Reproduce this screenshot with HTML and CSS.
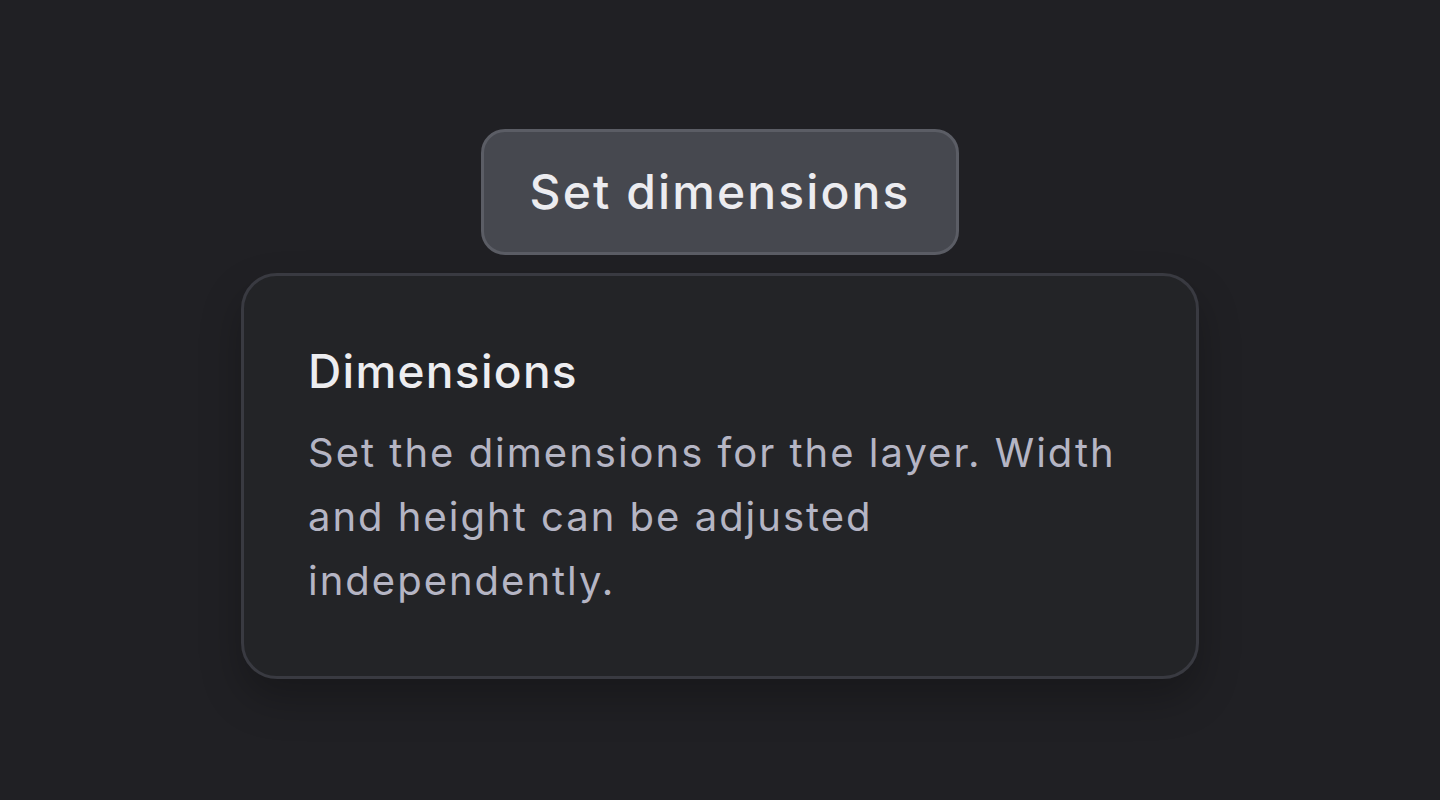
FILE: index.html
```html
<!DOCTYPE html>
<html lang="en">

<head>
  <meta charset="UTF-8">
  <meta name="viewport" content="width=device-width, initial-scale=1.0">
  <title>Dimensions</title>
  <link rel="stylesheet" href="styles.css">
</head>

<body>
  <main class="stage">
    <button class="trigger" type="button">Set dimensions</button>
    <div class="popover">
      <h2>Dimensions</h2>
      <p>Set the dimensions for the layer. Width and height can be adjusted independently.</p>
    </div>
  </main>
</body>

</html>
```

FILE: styles.css
```css
body {
  margin: 0;
  font-family: Inter, "Noto Sans", sans-serif;
  background-color: #202024;
}

.stage {
  box-sizing: border-box;
  height: 800px;
  padding-top: 8px;
  display: flex;
  flex-direction: column;
  align-items: center;
  justify-content: center;
  gap: 18px;
}

.trigger {
  font-family: inherit;
  font-size: 48px;
  font-weight: 500;
  line-height: 72px;
  letter-spacing: 2.1px;
  color: #ececf0;
  background: #46484f;
  border: 3px solid #5b5d65;
  border-radius: 24px;
  padding: 24px 46px;
  height: 126px;
  cursor: pointer;
}

.popover {
  width: 824px;
  padding: 64px 64px 63px;
  background: #232427;
  border: 3px solid #393a41;
  border-radius: 36px;
  box-shadow: 0 20px 40px rgba(0, 0, 0, 0.25);
}

.popover h2 {
  margin: 0 0 19px;
  font-size: 46px;
  font-weight: 500;
  line-height: 62px;
  letter-spacing: 1.3px;
  color: #ededf0;
}

.popover p {
  margin: 0;
  font-size: 40px;
  line-height: 64px;
  letter-spacing: 2px;
  color: #b5b5c4;
}
```
